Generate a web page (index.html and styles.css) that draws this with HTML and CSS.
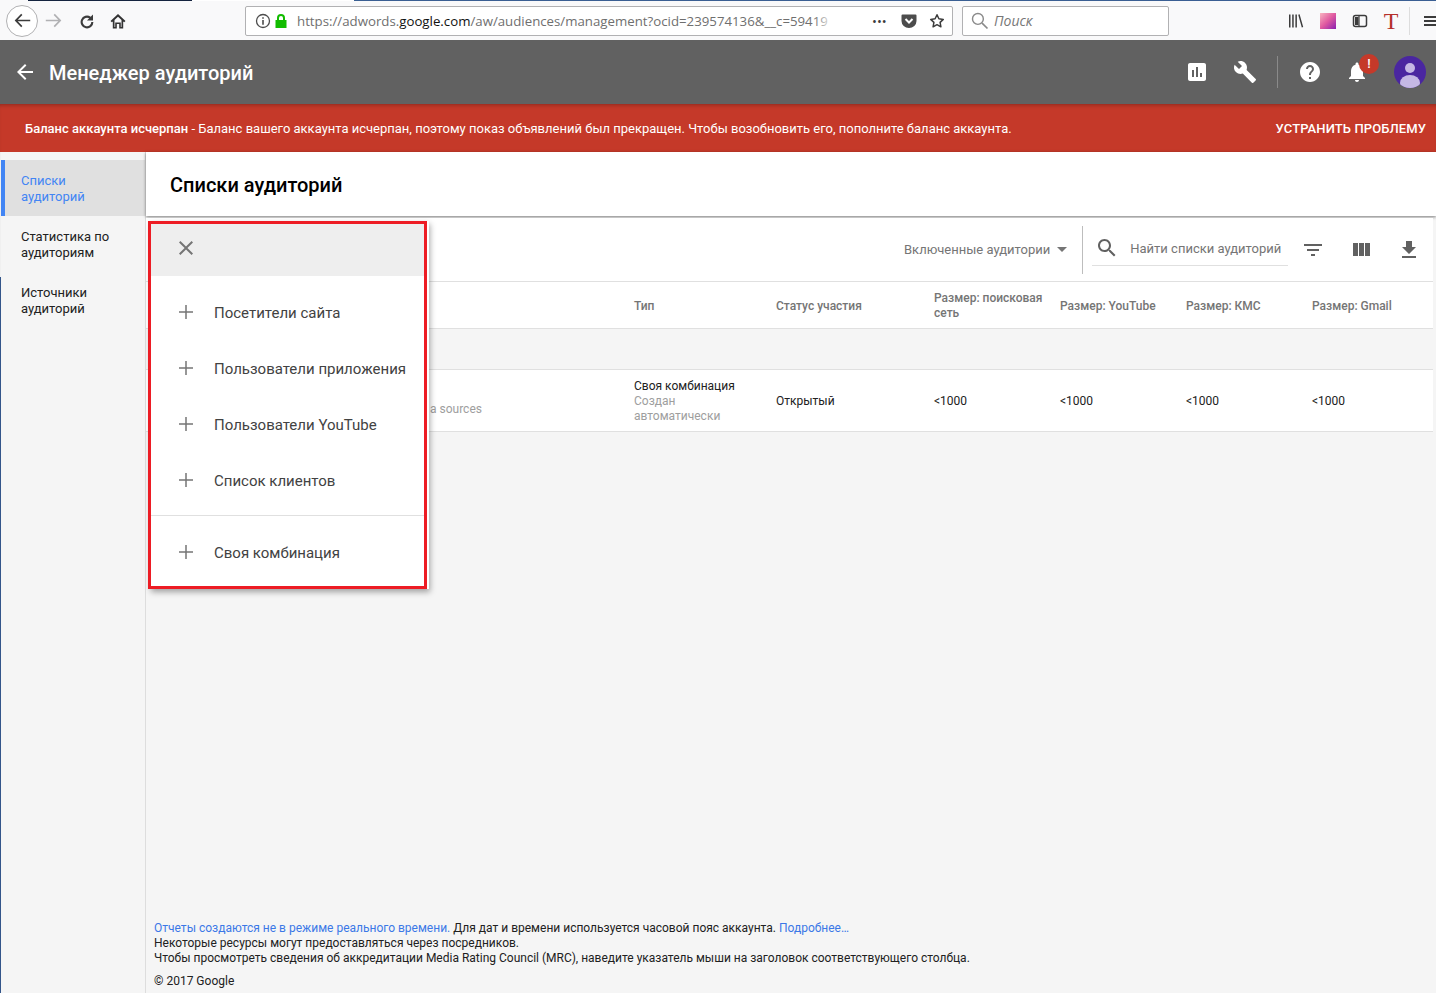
FILE: index.html
```html
<!DOCTYPE html>
<html lang="ru">
<head>
    <meta charset="UTF-8">
    <meta name="viewport" content="width=device-width, initial-scale=1.0">
    <title>Менеджер аудиторий</title>
    <link rel="stylesheet" href="styles.css">
</head>
<body>
    <svg class="sprite" width="0" height="0">
        <symbol id="i-back" viewBox="0 0 24 24"><path d="M20 11H7.83l5.59-5.59L12 4l-8 8 8 8 1.41-1.41L7.83 13H20v-2z"/></symbol>
        <symbol id="i-chart" viewBox="0 0 24 24"><path d="M19 3H5c-1.1 0-2 .9-2 2v14c0 1.1.9 2 2 2h14c1.1 0 2-.9 2-2V5c0-1.1-.9-2-2-2zM9 17H7v-7h2v7zm4 0h-2V7h2v10zm4 0h-2v-4h2v4z"/></symbol>
        <symbol id="i-wrench" viewBox="0 0 24 24"><path d="M22.7 19l-9.1-9.1c.9-2.3.4-5-1.5-6.9-2-2-5-2.4-7.4-1.3L9 6 6 9 1.6 4.7C.4 7.1.9 10.1 2.9 12.1c1.9 1.9 4.6 2.4 6.9 1.5l9.1 9.1c.4.4 1 .4 1.4 0l2.3-2.3c.5-.4.5-1.1.1-1.4z"/></symbol>
        <symbol id="i-help" viewBox="0 0 24 24"><path d="M12 2C6.48 2 2 6.48 2 12s4.48 10 10 10 10-4.48 10-10S17.52 2 12 2zm1 17h-2v-2h2v2zm2.07-7.75l-.9.92C13.45 12.9 13 13.5 13 15h-2v-.5c0-1.1.45-2.1 1.17-2.83l1.24-1.26c.37-.36.59-.86.59-1.41 0-1.1-.9-2-2-2s-2 .9-2 2H8c0-2.21 1.79-4 4-4s4 1.79 4 4c0 .88-.36 1.68-.93 2.25z"/></symbol>
        <symbol id="i-bell" viewBox="0 0 24 24"><path d="M12 22c1.1 0 2-.9 2-2h-4c0 1.1.89 2 2 2zm6-6v-5c0-3.07-1.64-5.64-4.5-6.32V4c0-.83-.67-1.5-1.5-1.5s-1.5.67-1.5 1.5v.68C7.63 5.36 6 7.92 6 11v5l-2 2v1h16v-1l-2-2z"/></symbol>
        <symbol id="i-search" viewBox="0 0 24 24"><path d="M15.5 14h-.79l-.28-.27C15.41 12.59 16 11.11 16 9.5 16 5.91 13.09 3 9.5 3S3 5.91 3 9.5 5.91 16 9.5 16c1.61 0 3.09-.59 4.23-1.57l.27.28v.79l5 4.99L20.49 19l-4.99-5zm-6 0C7.01 14 5 11.99 5 9.5S7.01 5 9.5 5 14 7.01 14 9.5 11.99 14 9.5 14z"/></symbol>
        <symbol id="i-filter" viewBox="0 0 24 24"><path d="M10 18h4v-2h-4v2zM3 6v2h18V6H3zm3 7h12v-2H6v2z"/></symbol>
        <symbol id="i-columns" viewBox="0 0 24 24"><path d="M10 18h5V5h-5v13zm-6 0h5V5H4v13zM16 5v13h5V5h-5z"/></symbol>
        <symbol id="i-download" viewBox="0 0 24 24"><path d="M19 9h-4V3H9v6H5l7 7 7-7zM5 18v2h14v-2H5z"/></symbol>
        <symbol id="i-close" viewBox="0 0 24 24"><path d="M19 6.41L17.59 5 12 10.59 6.41 5 5 6.41 10.59 12 5 17.59 6.41 19 12 13.41 17.59 19 19 17.59 13.41 12z"/></symbol>
        <symbol id="i-add" viewBox="0 0 24 24"><path d="M19 12.75h-6.25V19h-1.5v-6.25H5v-1.5h6.25V5h1.5v6.25H19z"/></symbol>
    </svg>

    <div class="browser">
        <div class="back-btn">
            <svg viewBox="0 0 16 16" width="19" height="19"><path d="M14.500 7.300H4l3.900-3.900-1-1L1.400 8l5.500 5.600 1-1L4 8.700h10.500z" fill="#3c3c3c"/></svg>
        </div>
        <svg class="b-forward" viewBox="0 0 16 16" width="19" height="19"><path d="M1.500 7.300H12L8.100 3.400l1-1L14.600 8l-5.500 5.600-1-1L12 8.700H1.500z" fill="#b1b1b3"/></svg>
        <svg class="b-reload" viewBox="0 0 16 16" width="16" height="16"><path d="M14 1.500v6H8l2.200-2.200A4.300 4.300 0 1 0 12.300 9h2.100A6.400 6.400 0 1 1 11.700 3.800z" fill="#3c3c3c"/></svg>
        <svg class="b-home" viewBox="0 0 16 16" width="16" height="16"><path d="M8 1L.5 8l1.300 1.300 1-.9V15.500h4v-4.500h2.400v4.500h4V8.400l1 .9L15.500 8zM11.500 14H10.800V9.500H5.200V14H4.500V7.100L8 3.700l3.500 3.400z" fill="#333"/></svg>

        <div class="urlbar">
            <svg class="u-info" viewBox="0 0 16 16" width="16" height="16"><circle cx="8" cy="8" r="6.500" fill="none" stroke="#4c4c4c" stroke-width="1.300"/><path d="M7.200 7h1.600v4.800H7.200zM7.200 4.200h1.600v1.600H7.200z" fill="#4c4c4c"/></svg>
            <svg class="u-lock" viewBox="0 0 14 16" width="14" height="16"><path d="M3 7V5a4 4 0 0 1 8 0v2h1.500v8h-11V7zm2 0h4V5a2 2 0 0 0-4 0z" fill="#12bc00"/></svg>
            <div class="u-text">https://adwords.<b>google.com</b>/aw/audiences/management?ocid=239574136&amp;__c=59419</div>
            <div class="u-fade"></div>
            <div class="u-dots">•••</div>
            <svg class="u-pocket" viewBox="0 0 16 16" width="16" height="16"><path d="M1.500 1.500h13a1 1 0 0 1 1 1V8a7.500 7 0 0 1-15 0V2.500a1 1 0 0 1 1-1z" fill="#4c4c4c"/><path d="M4.500 6L8 9.500 11.500 6" fill="none" stroke="#fff" stroke-width="2"/></svg>
            <svg class="u-star" viewBox="0 0 16 16" width="16" height="16"><path d="M8 1.800l1.900 4 4.400.6-3.200 3 .8 4.400L8 11.700l-3.900 2.100.8-4.400-3.200-3 4.400-.6z" fill="none" stroke="#3c3c3c" stroke-width="1.500" stroke-linejoin="round"/></svg>
        </div>

        <div class="searchbar">
            <svg viewBox="0 0 24 24" width="20" height="20"><circle cx="9.500" cy="9.500" r="6.500" fill="none" stroke="#8a8a8a" stroke-width="1.700"/><path d="M14.500 14.500l6.500 6.500" stroke="#8a8a8a" stroke-width="2"/></svg>
            <span>Поиск</span>
        </div>

        <svg class="b-library" viewBox="0 0 16 16" width="16" height="16"><path d="M1 1.500h1.500v13H1zM4.200 1.500h1.500v13H4.200zM7.400 1.500h1.500v13H7.400zM10.200 1.800l1.400-.5 3.600 12.700-1.400.5z" fill="#3c3c3c"/></svg>
        <div class="b-swatch"></div>
        <svg class="b-sidebar" viewBox="0 0 16 16" width="16" height="16"><rect x="1.500" y="2.500" width="13" height="11" rx="2" fill="none" stroke="#3c3c3c" stroke-width="1.500"/><path d="M3 4h3.500v8H3z" fill="#3c3c3c"/><path d="M7 3v10" stroke="#3c3c3c" stroke-width="1.200"/></svg>
        <div class="b-t">T</div>
        <div class="b-sep"></div>
        <svg class="b-menu" viewBox="0 0 16 16" width="16" height="16"><path d="M1 3h15v2H1zM1 7h15v2H1zM1 11h15v2H1z" fill="#3c3c3c"/></svg>
    </div>

    <header class="app-header">
        <svg class="icon back-arrow"><use href="#i-back"/></svg>
        <h1 class="app-title">Менеджер аудиторий</h1>
        <div class="header-icons">
            <svg class="icon h-chart"><use href="#i-chart"/></svg>
            <svg class="icon"><use href="#i-wrench"/></svg>
            <div class="header-sep"></div>
            <svg class="icon"><use href="#i-help"/></svg>
            <div class="bell">
                <svg class="icon"><use href="#i-bell"/></svg>
                <span class="bell-badge">!</span>
            </div>
            <svg class="avatar" viewBox="0 0 32 32" width="32" height="32">
                <defs><clipPath id="avatar-clip"><circle cx="16" cy="16" r="16"/></clipPath></defs>
                <circle cx="16" cy="16" r="16" fill="#4a26a0"/>
                <g clip-path="url(#avatar-clip)" fill="#c5b8e4">
                    <circle cx="16" cy="12" r="5"/>
                    <ellipse cx="16" cy="27" rx="10" ry="8"/>
                </g>
            </svg>
        </div>
    </header>

    <div class="banner">
        <div class="banner-text"><b>Баланс аккаунта исчерпан</b> - Баланс вашего аккаунта исчерпан, поэтому показ объявлений был прекращен. Чтобы возобновить его, пополните баланс аккаунта.</div>
        <div class="banner-action">УСТРАНИТЬ ПРОБЛЕМУ</div>
    </div>

    <div class="main">
        <nav class="sidebar">
            <div class="nav-item active">Списки аудиторий</div>
            <div class="nav-item">Статистика по аудиториям</div>
            <div class="nav-item">Источники аудиторий</div>
        </nav>

        <div class="content">
            <div class="page-title">Списки аудиторий</div>

            <div class="card">
                <div class="toolbar">
                    <div class="status-filter">Включенные аудитории <span class="caret"></span></div>
                    <div class="toolbar-sep"></div>
                    <div class="table-search">
                        <svg class="tool-icon"><use href="#i-search"/></svg>
                        <span>Найти списки аудиторий</span>
                    </div>
                    <svg class="tool-icon t-filter"><use href="#i-filter"/></svg>
                    <svg class="tool-icon t-columns"><use href="#i-columns"/></svg>
                    <svg class="tool-icon t-download"><use href="#i-download"/></svg>
                </div>

                <div class="row head-row">
                    <div></div>
                    <div>Тип</div>
                    <div>Статус участия</div>
                    <div>Размер: поисковая сеть</div>
                    <div>Размер: YouTube</div>
                    <div>Размер: КМС</div>
                    <div>Размер: Gmail</div>
                </div>
                <div class="total-row"></div>
                <div class="row data-row">
                    <div class="name-cell">a sources</div>
                    <div>Своя комбинация<div class="muted">Создан автоматически</div></div>
                    <div>Открытый</div>
                    <div>&lt;1000</div>
                    <div>&lt;1000</div>
                    <div>&lt;1000</div>
                    <div>&lt;1000</div>
                </div>
            </div>

            <footer class="footer">
                <div><a class="link">Отчеты создаются не в режиме реального времени.</a> Для дат и времени используется часовой пояс аккаунта. <a class="link">Подробнее…</a></div>
                <div>Некоторые ресурсы могут предоставляться через посредников.</div>
                <div>Чтобы просмотреть сведения об аккредитации Media Rating Council (MRC), наведите указатель мыши на заголовок соответствующего столбца.</div>
                <div class="copyright">© 2017 Google</div>
            </footer>

            <div class="add-menu">
                <div class="menu-head"><svg class="menu-icon"><use href="#i-close"/></svg></div>
                <div class="menu-group">
                    <div class="menu-item"><svg class="menu-icon"><use href="#i-add"/></svg><span>Посетители сайта</span></div>
                    <div class="menu-item"><svg class="menu-icon"><use href="#i-add"/></svg><span>Пользователи приложения</span></div>
                    <div class="menu-item"><svg class="menu-icon"><use href="#i-add"/></svg><span>Пользователи YouTube</span></div>
                    <div class="menu-item"><svg class="menu-icon"><use href="#i-add"/></svg><span>Список клиентов</span></div>
                </div>
                <div class="menu-group last">
                    <div class="menu-item"><svg class="menu-icon"><use href="#i-add"/></svg><span>Своя комбинация</span></div>
                </div>
            </div>
        </div>
    </div>
</body>
</html>
```
FILE: styles.css
```css
* {
    box-sizing: border-box;
}
body {
    font-family: Roboto, Arial, sans-serif;
    margin: 0;
    height: 100vh;
    overflow: hidden;
    display: flex;
    flex-direction: column;
    background-color: #f5f5f5;
    color: #212121;
}
.sprite {
    position: absolute;
}

/* browser toolbar */
.browser {
    height: 40px;
    flex: none;
    display: flex;
    align-items: center;
    background-color: #f9f9fa;
    border-top: 1px solid #fff;
    border-image: linear-gradient(to right, #f9f9fa 29px, #14233f 29px, #14233f 193px, #fff 193px, #fff 355px, #3a5f93 355px) 1;
    font-family: "Open Sans", sans-serif;
    overflow: hidden;
}
.browser > * {
    flex: none;
}
.back-btn {
    width: 32px;
    height: 32px;
    margin-left: 6px;
    border: 1px solid #b1b1b3;
    border-radius: 50%;
    background-color: #fff;
    display: flex;
    align-items: center;
    justify-content: center;
}
.b-forward {
    margin-left: 6px;
}
.b-reload {
    margin-left: 16px;
}
.b-home {
    margin-left: 15px;
}
.urlbar {
    width: 708px;
    height: 30px;
    margin-left: 119px;
    display: flex;
    align-items: center;
    background-color: #fff;
    border: 1px solid #b1b1b3;
    border-radius: 2px;
}
.urlbar > * {
    flex: none;
}
.u-info {
    margin-left: 9px;
}
.u-lock {
    margin-left: 3px;
}
.u-text {
    margin-left: 9px;
    width: 535px;
    font-size: 13.25px;
    color: #6f6f6f;
    white-space: nowrap;
}
.u-text b {
    font-weight: 400;
    color: #111;
}
.u-fade {
    width: 22px;
    height: 20px;
    margin-left: -18px;
    background: linear-gradient(to right, rgba(255, 255, 255, 0), #fff 90%);
}
.u-dots {
    margin-left: 36px;
    font-size: 13px;
    color: #3c3c3c;
}
.u-pocket {
    margin-left: 14px;
}
.u-star {
    margin-left: 12px;
}
.searchbar {
    width: 207px;
    height: 30px;
    margin-left: 9px;
    padding-left: 7px;
    display: flex;
    align-items: center;
    gap: 4px;
    background-color: #fff;
    border: 1px solid #b1b1b3;
    border-radius: 2px;
    font-size: 14px;
    font-style: italic;
    color: #777;
}
.b-library {
    margin-left: 119px;
}
.b-swatch {
    width: 16px;
    height: 16px;
    margin-left: 16px;
    background: linear-gradient(135deg, #f9b4c0, #e05aa0 50%, #8a1fb0);
}
.b-sidebar {
    margin-left: 16px;
}
.b-t {
    margin-left: 15px;
    width: 16px;
    font-family: "Liberation Serif", serif;
    font-size: 24px;
    line-height: 28px;
    color: #b5302a;
    text-align: center;
}
.b-sep {
    width: 1px;
    height: 28px;
    margin-left: 10px;
    background-color: #ddd;
}
.b-menu {
    margin-left: 13px;
}

/* app header */
.app-header {
    height: 64px;
    flex: none;
    display: flex;
    align-items: center;
    background-color: #616161;
    color: #fff;
}
.icon {
    width: 24px;
    height: 24px;
    fill: #fff;
    display: block;
}
.back-arrow {
    margin-left: 13px;
}
.app-title {
    margin: 0 0 0 12px;
    padding-top: 2px;
    font-size: 20px;
    font-weight: 500;
}
.header-icons {
    margin-left: auto;
    padding-right: 10px;
    display: flex;
    align-items: center;
    gap: 23px;
}
.h-chart {
    margin-right: 1px;
}
.header-sep {
    width: 1px;
    height: 32px;
    margin: 0 -3px;
    background-color: #8a8a8a;
}
.bell {
    position: relative;
}
.bell-badge {
    position: absolute;
    left: 14px;
    top: -6px;
    width: 20px;
    height: 20px;
    border-radius: 50%;
    background-color: #c53929;
    font-size: 13px;
    font-weight: 500;
    line-height: 20px;
    text-align: center;
}
.avatar {
    display: block;
    margin-left: 2px;
}

/* warning banner */
.banner {
    height: 48px;
    flex: none;
    padding: 0 10px 0 25px;
    display: flex;
    align-items: center;
    justify-content: space-between;
    background-color: #c53929;
    box-shadow: inset 0 4px 4px -3px rgba(0, 0, 0, 0.3);
    color: #fff;
    font-size: 13px;
}
.banner-text b {
    font-weight: 500;
}
.banner-action {
    font-weight: 500;
    letter-spacing: 0.1px;
}

/* page */
.main {
    flex: 1;
    min-height: 0;
    display: flex;
    border-left: 1px solid #33558a;
    border-image: linear-gradient(to bottom, #f0f0f0 126px, #33558a 126px) 1;
}
.sidebar {
    width: 145px;
    flex: none;
    padding-top: 8px;
    border-right: 1px solid #ddd;
    font-size: 13px;
    line-height: 16px;
}
.nav-item {
    height: 56px;
    padding: 13px 20px;
    color: #212121;
}
.nav-item.active {
    padding-left: 16px;
    background-color: #e0e0e0;
    border-left: 4px solid #4285f4;
    color: #4285f4;
}
.content {
    flex: 1;
    min-width: 0;
    display: flex;
    flex-direction: column;
    position: relative;
}
.page-title {
    height: 64px;
    flex: none;
    padding: 2px 0 0 24px;
    display: flex;
    align-items: center;
    background-color: #fff;
    box-shadow: 0 1px 3px rgba(0, 0, 0, 0.5);
    font-size: 20px;
    font-weight: 500;
    color: #000;
}
.card {
    margin: 2px 3px 0 0;
    background-color: #fff;
    border-bottom: 1px solid #e0e0e0;
    font-size: 12px;
}
.toolbar {
    height: 64px;
    display: flex;
    align-items: center;
    padding-left: 758px;
    border-bottom: 1px solid #e0e0e0;
}
.status-filter {
    font-size: 13px;
    color: #757575;
    white-space: nowrap;
    display: flex;
    align-items: center;
    gap: 7px;
}
.caret {
    width: 0;
    height: 0;
    border-left: 5px solid transparent;
    border-right: 5px solid transparent;
    border-top: 5px solid #757575;
}
.toolbar-sep {
    width: 1px;
    height: 48px;
    margin-left: 15px;
    background-color: #bdbdbd;
}
.table-search {
    width: 196px;
    height: 34px;
    margin: 0 0 2px 9px;
    display: flex;
    align-items: center;
    gap: 10px;
    padding-left: 3px;
    border-bottom: 1px solid #e0e0e0;
    font-size: 13px;
    color: #757575;
    white-space: nowrap;
}
.table-search span {
    margin-left: 1px;
}
.tool-icon {
    width: 24px;
    height: 24px;
    flex: none;
    fill: #616161;
    display: block;
}
.t-filter {
    margin-left: 13px;
}
.t-columns {
    margin-left: 24px;
}
.t-download {
    margin-left: 24px;
}
.row {
    display: grid;
    grid-template-columns: 488px 142px 158px 126px 126px 126px 1fr;
    align-items: center;
    padding-top: 2px;
    line-height: 15px;
}
.row > div {
    padding-right: 14px;
}
.head-row {
    height: 47px;
    font-weight: 500;
    color: #757575;
    border-bottom: 1px solid #e0e0e0;
}
.total-row {
    height: 41px;
    background-color: #f5f5f5;
    border-bottom: 1px solid #e0e0e0;
}
.data-row {
    height: 61px;
    color: #212121;
}
.name-cell {
    padding-left: 284px;
    padding-top: 15px;
    color: #9e9e9e;
}
.muted {
    color: #9e9e9e;
}
.footer {
    margin-top: auto;
    padding: 0 0 4px 8px;
    font-size: 12px;
    line-height: 15px;
    color: #212121;
}
.link {
    color: #3b78e7;
}
.copyright {
    margin-top: 8px;
}

/* add audience menu */
.add-menu {
    position: absolute;
    left: 2px;
    top: 69px;
    width: 279px;
    border: 3px solid #ed1c24;
    background-color: #fff;
    box-shadow: 2px 0 0 #fff, 3px 3px 6px rgba(0, 0, 0, 0.35);
    font-size: 15px;
    color: #424242;
}
.menu-head {
    height: 52px;
    padding: 0 0 4px 23px;
    display: flex;
    align-items: center;
    background-color: #eee;
}
.menu-icon {
    width: 24px;
    height: 24px;
    flex: none;
    fill: #757575;
    display: block;
}
.menu-group {
    padding: 8px 0 7px;
    border-bottom: 1px solid #e0e0e0;
}
.menu-group.last {
    padding-bottom: 6px;
    border-bottom: 0;
}
.menu-item {
    height: 56px;
    padding-left: 23px;
    display: flex;
    align-items: center;
    gap: 16px;
    white-space: nowrap;
}
.menu-item span {
    padding-top: 2px;
}
```
